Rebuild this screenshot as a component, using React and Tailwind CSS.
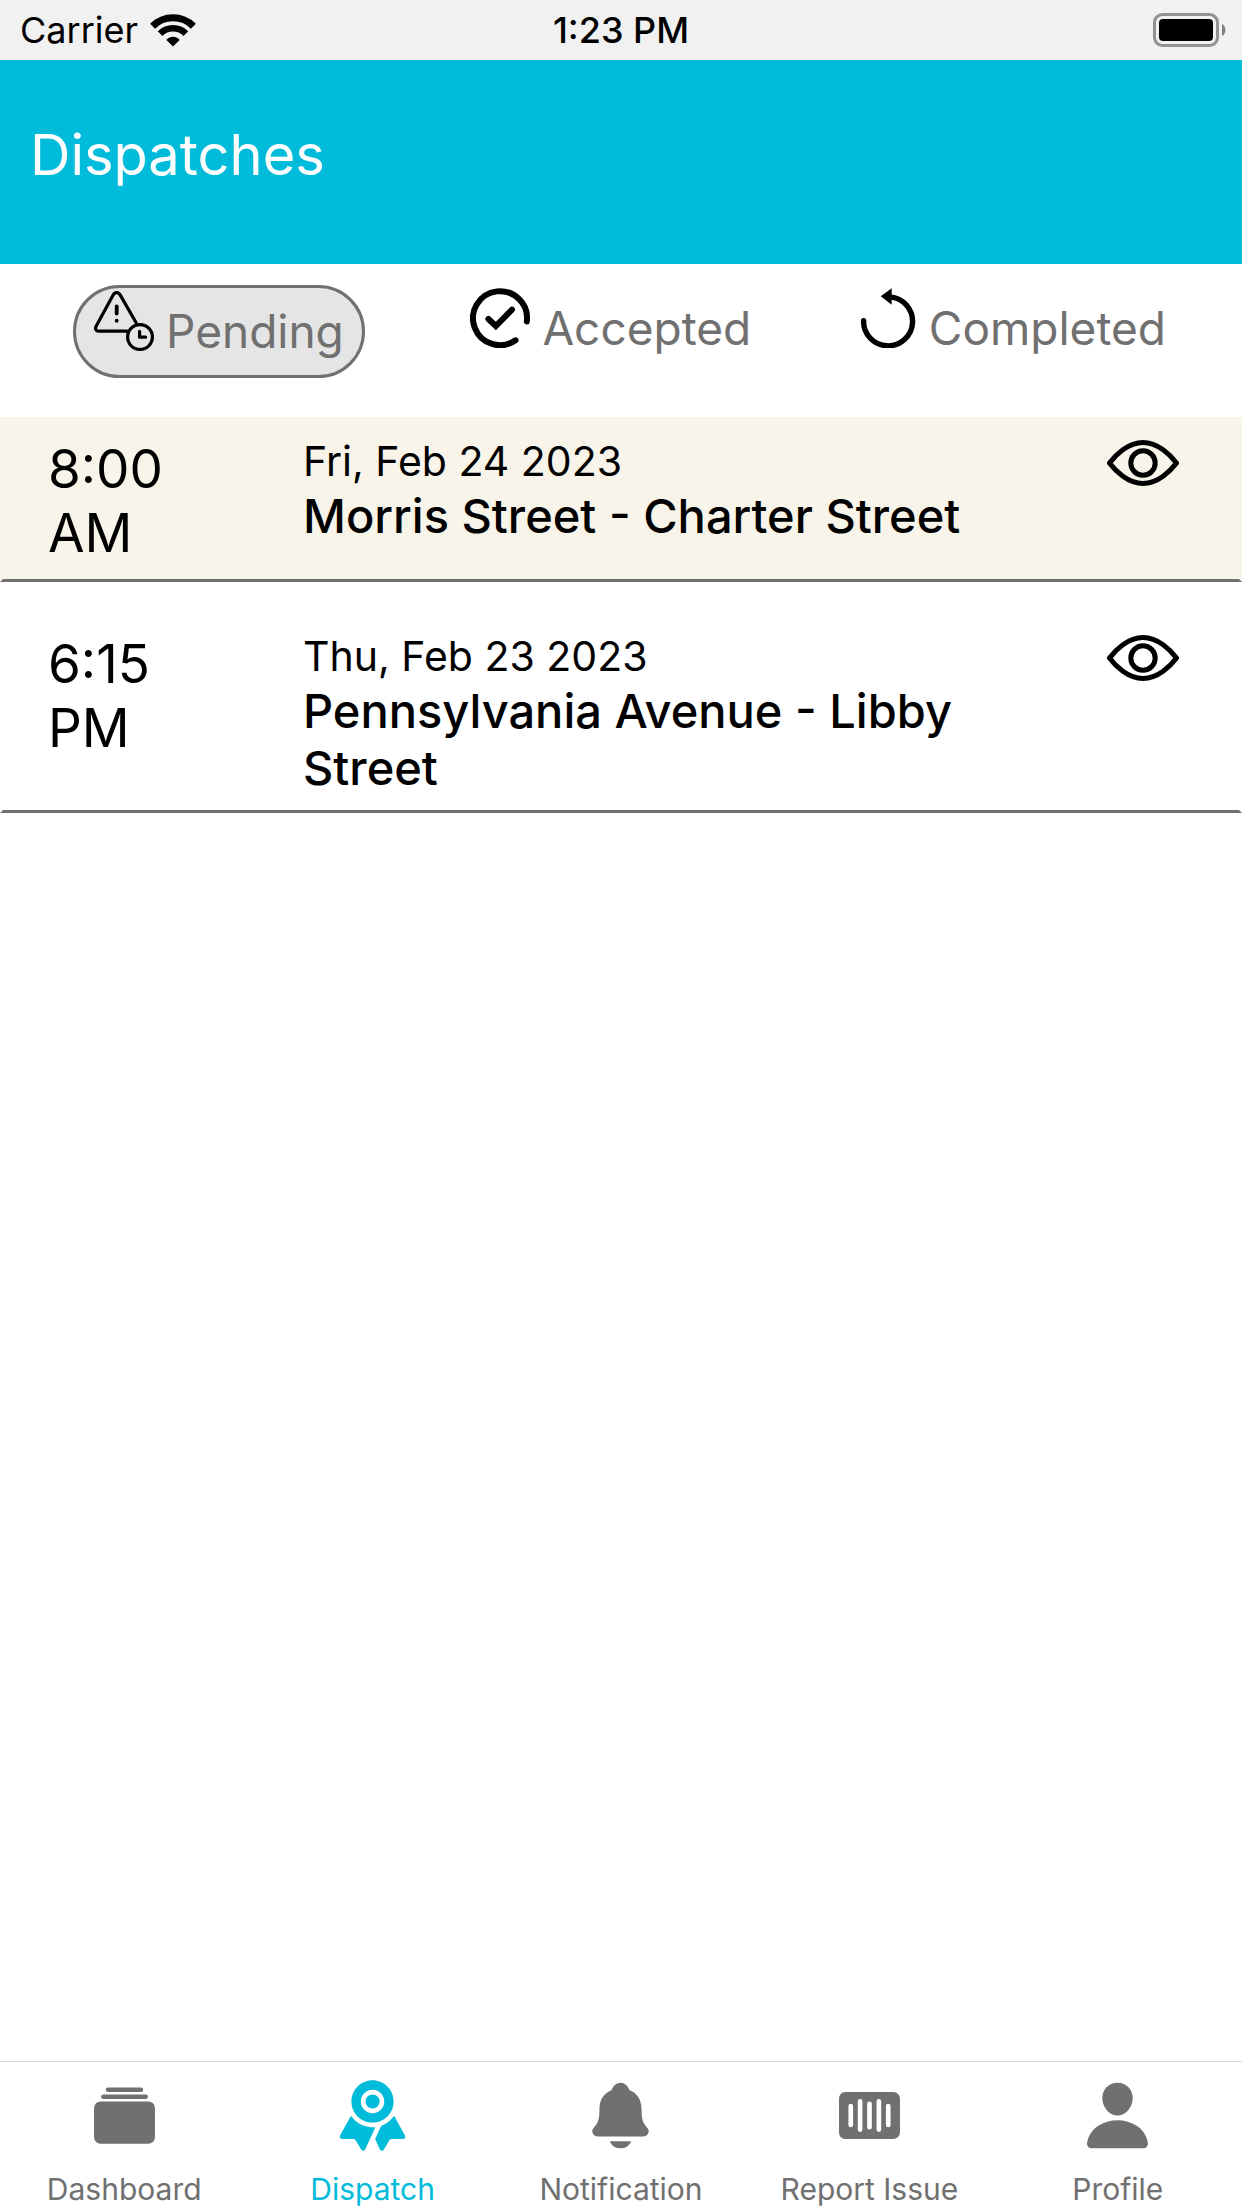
import React from 'react';
import { IoAlbums, IoBarcode, IoNotifications, IoPerson, IoRibbon } from 'react-icons/io5';

const WifiIcon = () => (
  <svg className="w-[46px] h-[33px]" viewBox="0 0 46 33" fill="none" stroke="#000" aria-hidden="true">
    <path d="M2.6 12.2a28.8 28.8 0 0 1 40.8 0" strokeWidth="7" />
    <path d="M10.1 19.6a18.3 18.3 0 0 1 25.8 0" strokeWidth="6.6" />
    <path d="M23 32.6l-6.6-6.6c3.6-4.4 9.6-4.4 13.2 0z" fill="#000" stroke="none" />
  </svg>
);

const BatteryIcon = () => (
  <svg className="w-[73px] h-[34px]" viewBox="0 0 73 34" role="img" aria-label="Battery full">
    <rect x="1.5" y="1.5" width="63" height="31" rx="8" fill="none" stroke="#929292" strokeWidth="3" />
    <rect x="6" y="6" width="54" height="22" rx="4" fill="#000" />
    <path d="M69 11c4.6 2.4 4.6 9.6 0 12z" fill="#808080" />
  </svg>
);

const PendingIcon = () => (
  <svg className="size-[60px]" viewBox="0 0 60 60" fill="none" stroke="#000" strokeWidth="3.2" strokeLinecap="round" strokeLinejoin="round" aria-hidden="true">
    <path d="M42 31.5L26 3.6c-1.6-2.7-5-2.7-6.6 0L2 35.4c-1 2.6 0 4.8 2.6 4.8H33" />
    <path d="M22.7 15.5v7" strokeWidth="3.8" />
    <path d="M22.7 29.7v.1" strokeWidth="3.8" />
    <circle cx="46" cy="46" r="12.4" />
    <path d="M45.6 40.4v5.8h6" />
  </svg>
);

const AcceptedIcon = () => (
  <svg className="size-[60px]" viewBox="0 0 60 60" fill="none" stroke="#000" strokeWidth="6" strokeLinecap="round" aria-hidden="true">
    <path d="M56.8 33.6A27 27 0 1 0 45.5 52.3" />
    <path d="M18.4 31l7.4 7L42 21.6" />
  </svg>
);

const CompletedIcon = () => (
  <svg className="size-[60px]" viewBox="0 0 60 60" fill="none" stroke="#000" strokeWidth="5.4" strokeLinecap="round" aria-hidden="true">
    <path d="M33 8.9A24.5 24.5 0 1 1 6.6 32.6" />
    <path d="M23.7 8.3L34.7.3v16.4z" fill="#000" stroke="none" />
  </svg>
);

const EyeIcon = () => (
  <svg className="w-[72px] h-[46px]" viewBox="0 0 72 46" fill="none" stroke="#000" strokeWidth="5" strokeLinejoin="round" aria-hidden="true">
    <path d="M2.5 23C8.5 15 21 2.5 36 2.5S63.5 15 69.5 23C63.5 31 51 43.5 36 43.5S8.5 31 2.5 23z" />
    <circle cx="36" cy="23" r="12.2" />
  </svg>
);

const filters = [
  { label: "Pending", Icon: PendingIcon, active: true },
  { label: "Accepted", Icon: AcceptedIcon },
  { label: "Completed", Icon: CompletedIcon },
];

const dispatches = [
  { id: 1, time: "8:00 AM", date: "Fri, Feb 24 2023", place: "Morris Street - Charter Street", highlighted: true },
  { id: 2, time: "6:15 PM", date: "Thu, Feb 23 2023", place: "Pennsylvania Avenue - Libby Street" },
];

const navItems = [
  { label: "Dashboard", Icon: IoAlbums },
  { label: "Dispatch", Icon: IoRibbon, active: true },
  { label: "Notification", Icon: IoNotifications },
  { label: "Report Issue", Icon: IoBarcode },
  { label: "Profile", Icon: IoPerson },
];

const StatusBar = () => (
  <div className="grid grid-cols-3 items-center h-[60px] px-4 bg-[#f1f1f1] text-[36px] leading-[60px]">
    <div className="flex items-center gap-3 pl-1">
      <span>Carrier</span>
      <WifiIcon />
    </div>
    <span className="text-center font-medium">1:23 PM</span>
    <div className="flex justify-end">
      <BatteryIcon />
    </div>
  </div>
);

const FilterTabs = () => (
  <div className="flex items-start justify-between pl-[73px] pr-[76px] pt-[21px] pb-[39px]">
    {filters.map(({ label, Icon, active }) => (
      <button
        key={label}
        type="button"
        aria-pressed={!!active}
        className={`flex items-start gap-3 pt-[3px] text-[46px] leading-[57px] text-[#707070] ${
          active ? "px-[18px] pb-[15px] border-3 border-[#707070] rounded-full bg-[#e5e5e5]" : ""
        }`}
      >
        <Icon />
        <span className="pt-3">{label}</span>
      </button>
    ))}
  </div>
);

const DispatchRow = ({ time, date, place, highlighted }) => (
  <li
    className={`flex items-start border-3 border-transparent border-b-[#707070] pt-[15px] pb-[14px] pl-[45px] pr-[60px] ${
      highlighted ? "bg-[#f8f4e9]" : ""
    }`}
  >
    <div className="w-[144px] mr-[111px] pt-0.5 text-[53px] leading-[64px]">{time}</div>
    <div className="flex-1">
      <p className="text-[41px] leading-[52px]">{date}</p>
      <p className="max-w-[700px] text-[47px] leading-[57px] font-medium">{place}</p>
    </div>
    <button type="button" aria-label={`View ${place}`} className="pt-[5px]">
      <EyeIcon />
    </button>
  </li>
);

const BottomNav = () => (
  <nav className="mt-auto grid grid-cols-5 border-t border-[#d8d8d8] pt-4 pb-px">
    {navItems.map(({ label, Icon, active }) => (
      <a
        key={label}
        href="#"
        aria-current={active ? "page" : undefined}
        className={`flex flex-col items-center gap-[18px] text-[30px] leading-9 whitespace-nowrap ${
          active ? "text-[#00bbda]" : "text-[#707070]"
        }`}
      >
        <Icon className="size-[75px]" />
        <span>{label}</span>
      </a>
    ))}
  </nav>
);

const App = () => {
  return (
    <div className="flex flex-col min-h-screen bg-white text-black font-['Inter',sans-serif]">
      <StatusBar />
      <header className="bg-[#00bbda] px-[30px] pt-[59px] pb-[73px]">
        <h1 className="text-[56px] leading-[72px] text-white">Dispatches</h1>
      </header>
      <main>
        <FilterTabs />
        <ul className="flex flex-col gap-[30px]">
          {dispatches.map((dispatch) => (
            <DispatchRow key={dispatch.id} {...dispatch} />
          ))}
        </ul>
      </main>
      <BottomNav />
    </div>
  );
};

export default App;
